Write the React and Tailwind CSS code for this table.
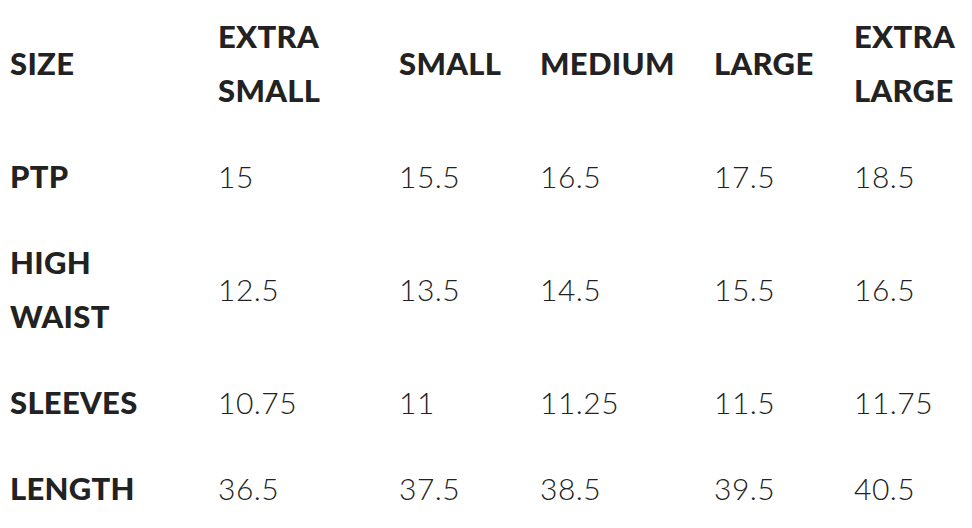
import React from 'react';

const sizes = ['EXTRA\nSMALL', 'SMALL', 'MEDIUM', 'LARGE', 'EXTRA\nLARGE'];

const rows = [
  { label: 'PTP', values: ['15', '15.5', '16.5', '17.5', '18.5'] },
  { label: 'HIGH\nWAIST', values: ['12.5', '13.5', '14.5', '15.5', '16.5'] },
  { label: 'SLEEVES', values: ['10.75', '11', '11.25', '11.5', '11.75'] },
  { label: 'LENGTH', values: ['36.5', '37.5', '38.5', '39.5', '40.5'] },
];

const widths = ['w-[208px]', 'w-[181px]', 'w-[141px]', 'w-[174px]', 'w-[140px]', 'w-[128px]'];

const head = "px-[10px] py-[16px] align-middle whitespace-pre-line text-[31px] leading-[54px] font-black tracking-[0.3px]";
const cell = "px-[10px] py-[16px] align-middle text-[30px] leading-[54px] font-light tracking-[0.5px]";

export default function App() {
  return (
    <div className="w-[972px] h-[528px] overflow-hidden bg-white font-['Lato',sans-serif] text-[#222]">
      <table className="w-[972px] table-fixed border-collapse text-left -mt-[7px]">
        <colgroup>
          {widths.map((w, i) => (
            <col key={i} className={w} />
          ))}
        </colgroup>
        <thead>
          <tr>
            <th className={head}>SIZE</th>
            {sizes.map((s) => (
              <th key={s} className={head}>
                {s}
              </th>
            ))}
          </tr>
        </thead>
        <tbody>
          {rows.map((row) => (
            <tr key={row.label}>
              <td className={head}>{row.label}</td>
              {row.values.map((v, i) => (
                <td key={i} className={cell}>
                  {v}
                </td>
              ))}
            </tr>
          ))}
        </tbody>
      </table>
    </div>
  );
}
